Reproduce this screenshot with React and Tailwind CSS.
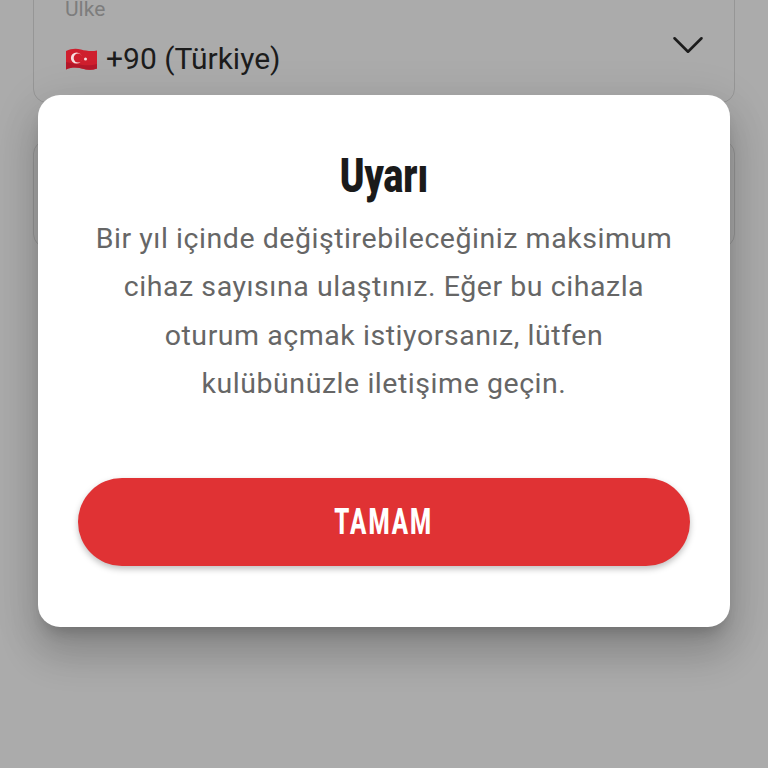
import { ChevronDown } from 'lucide-react';

function TurkishFlag() {
  return (
    <svg width="33" height="25" viewBox="0 0 33 25" className="shrink-0">
      <path d="M1 4C6 1.5 11 1 16 2.5C21 4 27 4.5 32 3.5V21.5C27 23.5 22 23 17 21.5C12 20 6 20 1 22.5Z" fill="#cf1f2e" />
      <path d="M1 15V22.5C6 20 12 20 17 21.5C22 23 27 23.5 32 21.5V17C24 20 10 17 1 15Z" fill="#b5182a" />
      <circle cx="11.5" cy="11" r="5.6" fill="#f6dfe0" />
      <circle cx="13.2" cy="11" r="4.5" fill="#cf1f2e" />
      <circle cx="20.5" cy="12" r="1.5" fill="#f6dfe0" />
    </svg>
  );
}

export default function App() {
  return (
    <div className="relative h-[768px] w-[768px] overflow-hidden bg-[#ababab] font-['Roboto',sans-serif]">
      {/* form behind the overlay */}
      <div className="mx-[33px] -mt-[20px] flex h-[123px] flex-col rounded-[14px] border border-[#969696] px-[31px]">
        <span className="mt-[14px] text-[21px] leading-[28px] text-[#7d7d7d]">Ülke</span>
        <div className="mt-[18px] flex items-center">
          <TurkishFlag />
          <span className="ml-[8px] text-[30px] leading-[36px] text-[#1c1c1c]">+90 (Türkiye)</span>
          <ChevronDown className="-mr-[12px] -mt-[28px] ml-auto text-[#1c1c1c]" size={54} strokeWidth={1.15} />
        </div>
      </div>
      <div className="mx-[33px] mt-[37px] h-[108px] rounded-[14px] border border-[#969696]" />

      {/* dialog */}
      <div className="absolute left-[38px] top-[95px] flex h-[532px] w-[692px] flex-col items-center rounded-[22px] bg-white px-[40px] shadow-[0_26px_38px_3px_rgba(0,0,0,0.16),0_9px_46px_6px_rgba(0,0,0,0.08),0_11px_15px_-7px_rgba(0,0,0,0.2)]">
        <h1 className="mt-[53px] origin-center scale-x-[0.777] text-[48px] font-black leading-[56px] text-[#1a1a1a]">Uyarı</h1>
        <p className="mt-[11px] w-full text-center text-[28.5px] leading-[48.3px] tracking-[0.55px] text-[#666666]">
          Bir yıl içinde değiştirebileceğiniz maksimum
          <br />
          cihaz sayısına ulaştınız. Eğer bu cihazla
          <br />
          oturum açmak istiyorsanız, lütfen
          <br />
          kulübünüzle iletişime geçin.
        </p>
        <button
          type="button"
          className="mt-[70px] flex h-[88px] w-[612px] shrink-0 items-center justify-center rounded-full bg-[#e03234] shadow-[0_3px_6px_rgba(0,0,0,0.25)]"
        >
          <span className="scale-x-[0.67] text-[36px] font-extrabold tracking-[3px] text-white">TAMAM</span>
        </button>
      </div>
    </div>
  );
}
